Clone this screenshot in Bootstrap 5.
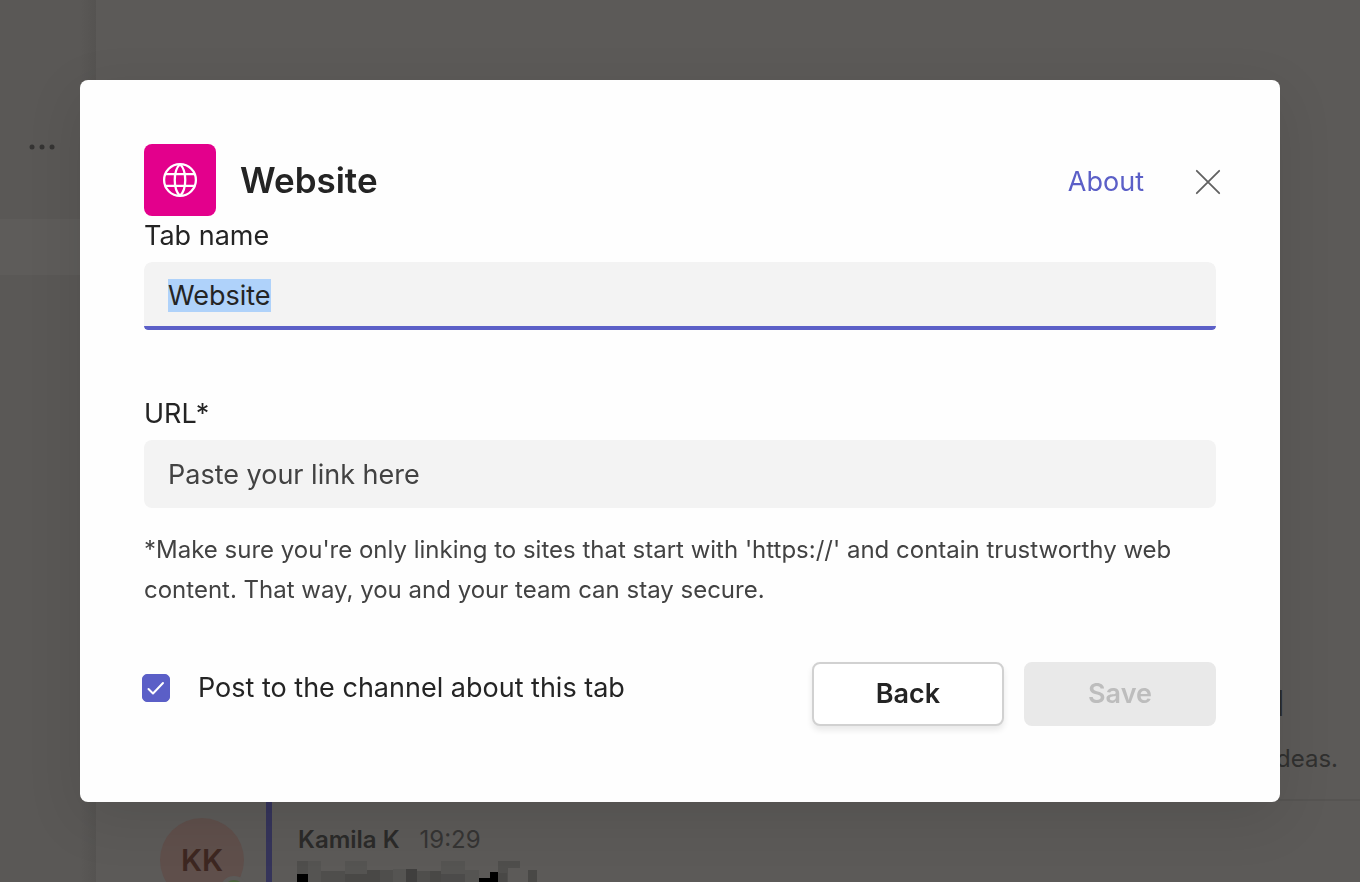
<!DOCTYPE html>
<html lang="en">
<head>
<meta charset="utf-8">
<meta name="viewport" content="width=device-width, initial-scale=1">
<title>Website</title>
<link href="https://cdn.jsdelivr.net/npm/bootstrap@5.3.0/dist/css/bootstrap.min.css" rel="stylesheet">
<style>
  body { font-family: Inter, "Liberation Sans", sans-serif; font-size: 27px; line-height: 40px; color: #242424; background: #5c5a58; overflow: hidden; }

  /* dimmed app behind the dialog */
  .app-rail { width: 96px; background: linear-gradient(90deg, #5a5856 84%, #555351); padding-top: 144px; }
  .rail-dots { height: 6px; padding-left: 29px; }
  .rail-dots svg { display: block; }
  .rail-active { height: 56px; margin-top: 69px; background: #5e5c5a; }
  .feed-intro { padding: 0 22px 20px; text-align: right; font-size: 24px; line-height: 40px; color: #30302f; border-bottom: 2px solid #565452; }
  .feed-title { font-size: 36px; line-height: 56px; font-weight: 700; padding: 0 54px 8px 0; color: #2a2a29; }
  .feed-post { height: 81px; }
  .post-who { width: 170px; padding: 17px 0 0 64px; }
  .post-avatar { width: 84px; height: 84px; background: #5f4f4b; color: #3d2721; font-size: 30px; font-weight: 600; position: relative; }
  .post-status { position: absolute; right: -4px; bottom: -2px; width: 28px; height: 28px; border: 4px solid #5c5a58; background: #49603a; }
  .post-body { border-left: 6px solid #35345a; padding: 19px 0 0 25px; font-size: 24px; line-height: 40px; color: #2b2a29; }
  .post-body strong { font-weight: 600; margin-left: 1px; }
  .post-body time { margin-left: 20px; color: #353433; }

  /* dialog */
  .tab-modal .modal-dialog { max-width: none; margin: 80px; }
  .tab-modal .modal-content { border: 0; border-radius: 8px; padding: 64px 64px 76px; background: #fefefe; color: #242424; box-shadow: 0 16px 56px rgba(0,0,0,.1); }
  .app-tile { width: 72px; height: 72px; border-radius: 8px; background: #e3008c; }
  .dialog-title { font-size: 35px; line-height: 40px; font-weight: 600; margin-left: 24px; }
  .about-link { color: #5b5fc7; margin-right: 48px; }
  .close-x { width: 32px; height: 32px; margin-right: -8px; }
  .field-label { display: block; margin-bottom: 6px; }
  .field-box, .field-box:focus { height: 68px; padding: 0 24px; border: 0; border-radius: 8px; background-color: #f3f3f3; color: #242424; font-size: 27px; line-height: 34px; box-shadow: none; }
  .field-box::placeholder { color: #424242; opacity: 1; }
  .field-active, .field-active:focus { background-image: linear-gradient(#5b5fc7, #5b5fc7); background-size: 100% 4px; background-position: bottom; background-repeat: no-repeat; border-bottom-left-radius: 4px; border-bottom-right-radius: 4px; padding-bottom: 2px; }
  .field-box::selection { background: #afd2fa; color: #242424; }
  .field-gap { margin-bottom: 64px; }
  .url-note { margin: 22px 0 52px; font-size: 24px; line-height: 40px; color: #424242; }
  .post-check { width: 28px; height: 28px; margin: 0 28px 0 -2px; border-radius: 5px !important; }
  .post-check:checked { background-color: #5b5fc7; border-color: #5b5fc7;
    background-size: 28px 28px; background-image: url("data:image/svg+xml,%3Csvg xmlns='http://www.w3.org/2000/svg' viewBox='0 0 28 28'%3E%3Cpath d='M6.500 15l4.500 4.500L21 9' fill='none' stroke='%23fff' stroke-width='2' stroke-linecap='round' stroke-linejoin='round'/%3E%3C/svg%3E"); }
  .check-row { height: 52px; }
  .btn-row { gap: 20px; }
  .dialog-btn { width: 192px; height: 64px; border-radius: 8px; border: 2px solid #d1d1d1; font-size: 27px; font-weight: 600; line-height: 36px; color: #242424; background: #fff; box-shadow: 0 4px 6px rgba(0,0,0,.09); }
  .dialog-btn:disabled { background: #e9e9e9; border-color: #e9e9e9; color: #bdbdbd; opacity: 1; box-shadow: none; }
</style>
</head>
<body>
<div class="d-flex vh-100 overflow-hidden" aria-hidden="true">
  <aside class="app-rail flex-shrink-0">
    <div class="rail-dots"><svg width="28" height="6" fill="#353433"><circle cx="3" cy="3" r="2.500"/><circle cx="13" cy="3" r="2.500"/><circle cx="23" cy="3" r="2.500"/></svg></div>
    <div class="rail-active"></div>
  </aside>
  <main class="flex-grow-1 d-flex flex-column justify-content-end">
    <div class="feed-intro">
      <div class="feed-title">l</div>
      <div>ideas.</div>
    </div>
    <div class="feed-post d-flex overflow-hidden">
      <div class="post-who flex-shrink-0">
        <div class="post-avatar rounded-circle d-flex align-items-center justify-content-center">KK<span class="post-status rounded-circle"></span></div>
      </div>
      <div class="post-body flex-grow-1">
        <div><strong>Kamila K</strong><time>19:29</time></div>
        <svg class="d-block" width="242" height="26" shape-rendering="crispEdges">
          <path fill="#4f4e4c" d="M0 1h11v13H0zM24 11h24v15H24zM83 10h13v16H83zM120 11h13v15h-13zM201 1h22v7h-12v18h-10z"/>
          <path fill="#555452" d="M11 1h13v25H11zM48 1h22v13H48zM96 9h13v17H96zM144 1h24v13h-24zM168 10h14v16h-14z"/>
          <path fill="#494846" d="M48 14h22v-4h13v16H48zM133 11h11v15h-11zM201 13h9v13h-9zM231 10h9v16h-9z"/>
          <path fill="#403f3e" d="M109 9h11v17h-11z"/>
          <path fill="#4c4b4a" d="M144 14h24v12h-24z"/>
          <path fill="#000" d="M0 14h11v12H0zM193 12h8v14h-19v-8h11z"/>
        </svg>
      </div>
    </div>
  </main>
</div>

<div class="modal tab-modal show d-block" tabindex="-1" role="dialog" aria-labelledby="dialogTitle">
  <div class="modal-dialog">
    <form class="modal-content">
      <header class="d-flex align-items-center">
        <div class="app-tile d-flex align-items-center justify-content-center flex-shrink-0">
          <svg width="36" height="36" viewBox="0 0 36 36" fill="none" stroke="#fff" stroke-width="2.300"><circle cx="18" cy="18" r="15.900"/><path d="M3.500 12.200h29M3.500 23.800h29M18 2c-7 7-7 25 0 32M18 2c7 7 7 25 0 32"/></svg>
        </div>
        <h1 class="dialog-title mb-0 me-auto" id="dialogTitle">Website</h1>
        <div class="d-flex align-items-center pt-1">
          <a class="about-link text-decoration-none" href="#">About</a>
          <button type="button" class="close-x btn p-0 border-0 d-flex align-items-center justify-content-center" aria-label="Close">
            <svg width="26" height="26" viewBox="0 0 26 26" stroke="#616161" stroke-width="1.800" stroke-linecap="round"><path d="M1.800 1.800l22.400 22.400M24.200 1.800L1.800 24.200"/></svg>
          </button>
        </div>
      </header>
      <div class="field-gap">
        <label class="field-label" for="tabName">Tab name</label>
        <input class="form-control field-box field-active" id="tabName" type="text" value="Website" autocomplete="off" spellcheck="false">
      </div>
      <div>
        <label class="field-label" for="tabUrl">URL*</label>
        <input class="form-control field-box" id="tabUrl" type="text" placeholder="Paste your link here">
      </div>
      <p class="url-note">*Make sure you're only linking to sites that start with 'https://' and contain trustworthy web content. That way, you and your team can stay secure.</p>
      <footer class="d-flex align-items-start">
        <div class="check-row d-flex align-items-center me-auto">
          <input class="form-check-input post-check flex-shrink-0" type="checkbox" id="postTab" checked>
          <label for="postTab">Post to the channel about this tab</label>
        </div>
        <div class="btn-row d-flex">
          <button type="button" class="btn dialog-btn">Back</button>
          <button type="submit" class="btn dialog-btn" disabled>Save</button>
        </div>
      </footer>
    </form>
  </div>
</div>
<script src="https://cdn.jsdelivr.net/npm/bootstrap@5.3.0/dist/js/bootstrap.bundle.min.js"></script>
<script>
  const tabName = document.getElementById('tabName');
  tabName.focus();
  tabName.select();
</script>
</body>
</html>
